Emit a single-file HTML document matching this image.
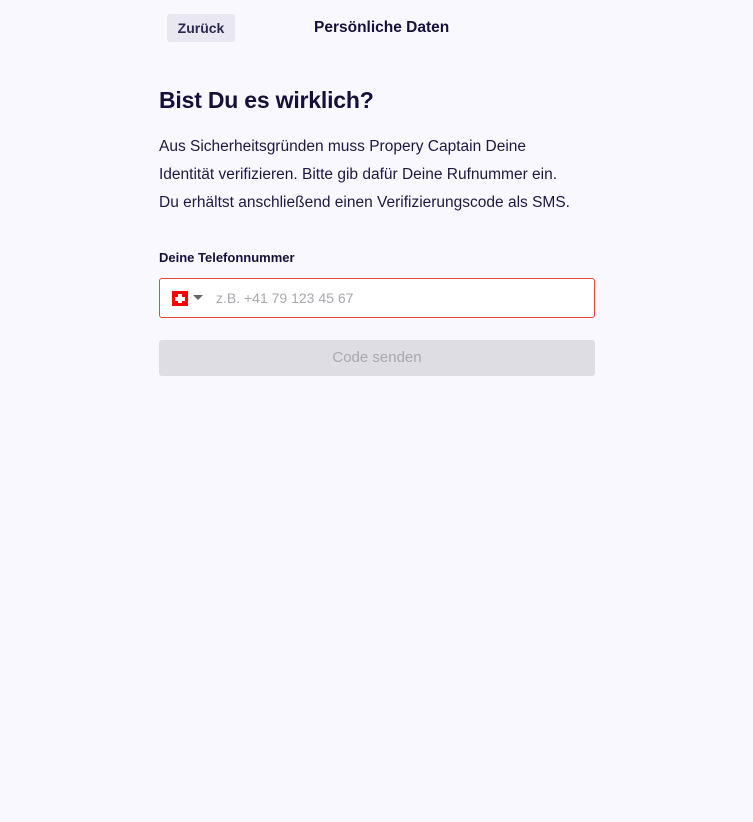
<!DOCTYPE html>
<html><head><meta charset="utf-8"><style>
*{margin:0;padding:0;box-sizing:border-box}
body{width:753px;height:822px;background:#f9f8fe;font-family:"Liberation Sans",sans-serif;color:#160f3a;position:relative;overflow:hidden}
.back{position:absolute;left:167px;top:14px;width:68px;height:28px;background:#e8e7f2;border-radius:3px;font-size:14px;font-weight:bold;color:#2c2850;text-align:center;line-height:28px}
.title{position:absolute;left:314px;top:18px;font-size:15.5px;font-weight:bold;line-height:20px}
h1{position:absolute;left:159px;top:85px;font-size:23px;font-weight:bold;line-height:30px;letter-spacing:-0.2px}
.p{position:absolute;left:159px;top:133px;width:460px;font-size:15.5px;line-height:28px;color:#1d1840;white-space:nowrap}
.lbl{position:absolute;left:159px;top:249px;font-size:13px;font-weight:bold;line-height:18px}
.inp{position:absolute;left:159px;top:278px;width:436px;height:40px;background:#fff;border:1px solid #f04438;border-radius:3px}
.flag{position:absolute;left:12px;top:12px;width:16px;height:15px;background:#f00}
.flag:before{content:"";position:absolute;left:6px;top:3px;width:4px;height:9px;background:#fff}
.flag:after{content:"";position:absolute;left:3px;top:5.5px;width:10px;height:4px;background:#fff}
.tri{position:absolute;left:33px;top:16px;width:0;height:0;border-left:5px solid transparent;border-right:5px solid transparent;border-top:5px solid #666}
.ph{position:absolute;left:56px;top:10px;font-size:14px;color:#a8a8b0;line-height:18px}
.btn{position:absolute;left:159px;top:340px;width:436px;height:36px;background:#dedde3;border-radius:3px;text-align:center;line-height:36px;font-size:15px;color:#a9a8ae}
</style></head><body>
<div class="back">Zurück</div>
<div class="title">Persönliche Daten</div>
<h1>Bist Du es wirklich?</h1>
<div class="p">Aus Sicherheitsgründen muss Propery Captain Deine<br>Identität verifizieren. Bitte gib dafür Deine Rufnummer ein.<br>Du erhältst anschließend einen Verifizierungscode als SMS.</div>
<div class="lbl">Deine Telefonnummer</div>
<div class="inp"><div class="flag"></div><div class="tri"></div><div class="ph">z.B. +41 79 123 45 67</div></div>
<div class="btn">Code senden</div>
</body></html>
